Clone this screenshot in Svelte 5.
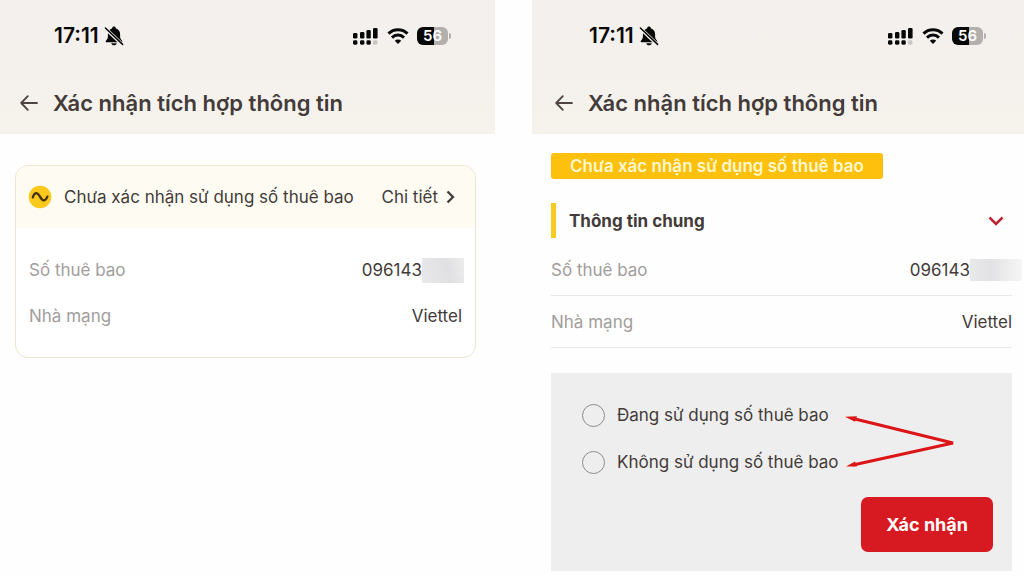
<script>
  let usage = $state('');
  const phone = '096143';
</script>

{#snippet header()}
  <header>
    <div class="status">
      <span class="clock">17:11</span>
      <svg class="bell" width="20" height="20" viewBox="0 0 20 20" aria-label="Im lặng" role="img">
        <path d="M1.600 15.400c0-.9 2.300-2 2.300-4.400V8.300C3.900 5 5.600 3.300 8 2.600 8.300 1.200 9.100.6 10 .6s1.700.6 2 2c2.400.7 4.100 2.400 4.100 5.700V11c0 2.400 2.300 3.500 2.300 4.400 0 .5-.3.800-.9.800h-15c-.6 0-.9-.3-.9-.8zM7.300 17.200h5.400c-.3 1.400-1.300 2.100-2.700 2.100s-2.400-.7-2.700-2.100z" fill="#080808" />
        <path d="M1.200 2.200 18.600 18.800" stroke="#f4f1ed" stroke-width="3.400" />
        <path d="M1.400 2 18.600 18.400" stroke="#080808" stroke-width="1.500" stroke-linecap="round" />
      </svg>
      <svg class="signal" width="26" height="18" viewBox="0 0 26 18" aria-label="Sóng di động" role="img">
        <g fill="#080808">
          <rect x="0" y="6" width="4.400" height="5.500" rx="1.300" />
          <rect x="7" y="5" width="4.400" height="6.500" rx="1.300" />
          <rect x="13.400" y="3" width="4.400" height="8.500" rx="1.300" />
          <rect x="20" y="1" width="4.600" height="10.500" rx="1.300" />
          <rect x="0" y="13.300" width="4.400" height="4.400" rx="1.400" />
          <rect x="7" y="13.300" width="4.400" height="4.400" rx="1.400" />
          <rect x="13.400" y="13.300" width="4.400" height="4.400" rx="1.400" />
        </g>
        <rect x="20" y="13.300" width="4.400" height="4.400" rx="1.400" fill="#c8c5c3" />
      </svg>
      <svg class="wifi" width="22" height="16" viewBox="0 0 22 16" aria-label="Wi-Fi" role="img">
        <g fill="none" stroke="#080808" stroke-width="3">
          <path d="M1.500 5.600a13.500 13.500 0 0 1 19 0" />
          <path d="M5 9.600a8.500 8.500 0 0 1 12 0" />
        </g>
        <path d="M11 16 7.800 12.700a4.600 4.600 0 0 1 6.400 0z" fill="#080808" />
      </svg>
      <div class="battery"><span>56</span></div>
    </div>
    <div class="title">
      <button class="back" aria-label="Quay lại">
        <svg width="18" height="16" viewBox="0 0 18 16" fill="none" stroke="#4e4543" stroke-width="1.800" stroke-linecap="round" stroke-linejoin="round">
          <path d="M17 8H1.200M7.800 1.200 1.200 8l6.600 6.800" />
        </svg>
      </button>
      <h1>Xác nhận tích hợp thông tin</h1>
    </div>
  </header>
{/snippet}

<main>
  <section class="screen">
    {@render header()}
    <article class="card">
      <div class="card-head">
        <svg width="24" height="24" viewBox="0 0 24 24" aria-hidden="true">
          <circle cx="12" cy="12" r="11.300" fill="#fac91b" />
          <path d="M4.800 12.400C6.400 7 9.200 6.600 11.800 11.400s5.200 5.600 7.600.2" fill="none" stroke="#43350f" stroke-width="2.300" stroke-linecap="round" />
        </svg>
        <span>Chưa xác nhận sử dụng số thuê bao</span>
        <a href="#chi-tiet">
          Chi tiết
          <svg width="9" height="14" viewBox="0 0 9 14" fill="none" stroke="#433b39" stroke-width="2.300" aria-hidden="true">
            <path d="m1.500 1.500 5.500 5.500-5.500 5.500" />
          </svg>
        </a>
      </div>
      <dl>
        <div><dt>Số thuê bao</dt><dd>{phone}<i class="mask"></i></dd></div>
        <div><dt>Nhà mạng</dt><dd>Viettel</dd></div>
      </dl>
    </article>
  </section>

  <section class="screen detail">
    {@render header()}
    <div class="body">
      <p class="badge">Chưa xác nhận sử dụng số thuê bao</p>
      <button class="section-head" aria-expanded="true">
        <span>Thông tin chung</span>
        <svg width="16" height="10" viewBox="0 0 16 10" fill="none" stroke="#bd2530" stroke-width="2.500" aria-hidden="true">
          <path d="m1.500 1.500 6.500 6.500 6.500-6.500" />
        </svg>
      </button>
      <dl>
        <div><dt>Số thuê bao</dt><dd>{phone}<i class="mask"></i></dd></div>
        <div><dt>Nhà mạng</dt><dd>Viettel</dd></div>
      </dl>
      <form onsubmit={(e) => e.preventDefault()}>
        <label><input type="radio" name="usage" value="yes" bind:group={usage} /><span>Đang sử dụng số thuê bao</span></label>
        <label><input type="radio" name="usage" value="no" bind:group={usage} /><span>Không sử dụng số thuê bao</span></label>
        <button class="confirm">Xác nhận</button>
        <svg class="arrows" width="110" height="52" viewBox="0 0 110 52" aria-hidden="true">
          <path d="M8 2.500 108 27 8 49" fill="none" stroke="#dc1518" stroke-width="3" />
          <path d="m0 .8 12-.6-2 5.500zM1 50.600l9-5 2 5z" fill="#dc1518" />
        </svg>
      </form>
    </div>
  </section>
</main>

<style>
  :global(body) {
    margin: 0;
    background: #fefefe;
  }
  main {
    display: grid;
    grid-template-columns: 495fr 492fr;
    column-gap: 37px;
    font-family: Inter, 'Liberation Sans', sans-serif;
    font-size: 17px;
    line-height: 24px;
    color: #433b39;
  }
  .screen {
    --inset: 20px;
    --status-end: 44px;
    min-width: 0;
  }
  .detail {
    --inset: 23px;
    --status-end: 38px;
  }
  button {
    font: inherit;
    color: inherit;
    border: 0;
    padding: 0;
    background: none;
    cursor: pointer;
  }
  svg {
    display: block;
    flex: none;
  }
  header {
    box-sizing: border-box;
    height: 134px;
    padding: 24px var(--status-end) 0 var(--inset);
    background: linear-gradient(#f3f0ed, #f4f1ed 55%, #f6f2eb);
  }
  .status {
    display: flex;
    align-items: center;
    height: 24px;
    padding-left: 34px;
    color: #080808;
  }
  .clock {
    font-size: 21px;
    font-weight: 600;
  }
  .bell {
    margin-left: 5px;
  }
  .signal {
    margin-left: auto;
  }
  .wifi {
    margin-left: 8px;
  }
  .battery {
    position: relative;
    width: 31px;
    height: 18px;
    margin: 0 3px 0 8px;
    border-radius: 6px;
    background: linear-gradient(90deg, #080808 56%, #b3afad 56%);
    color: #fff;
    font-size: 15px;
    font-weight: 600;
    line-height: 18px;
    text-align: center;
  }
  .battery::after {
    content: '';
    position: absolute;
    left: 32px;
    top: 6px;
    width: 2px;
    height: 6px;
    border-radius: 0 3px 3px 0;
    background: #b3afad;
  }
  .title {
    display: flex;
    align-items: center;
    gap: 15px;
    margin-top: 41px;
  }
  h1 {
    margin: 0;
    font-size: 22px;
    font-weight: 600;
    line-height: 28px;
    white-space: nowrap;
  }
  .card {
    margin: 31px 19px 0 15px;
    border: 1px solid #ece5cf;
    border-radius: 13px;
    overflow: hidden;
    background: #fff;
  }
  .card-head {
    display: flex;
    align-items: center;
    gap: 12px;
    height: 62px;
    padding: 0 20px 0 12px;
    background: #fefbf3;
    white-space: nowrap;
  }
  a {
    display: flex;
    align-items: center;
    gap: 8px;
    margin-left: auto;
    color: inherit;
    text-decoration: none;
  }
  dl {
    margin: 0;
  }
  dl div {
    display: flex;
    justify-content: space-between;
    align-items: center;
  }
  dt {
    color: #a19d9c;
  }
  dd {
    display: flex;
    align-items: center;
    margin: 0;
  }
  .card dl {
    padding: 19px 13px 18px;
  }
  .card dl div {
    height: 46px;
  }
  .mask {
    width: 42px;
    height: 25px;
    margin-right: -2px;
    background: linear-gradient(75deg, #e9e9eb, #e0e0e2 60%, #ededee);
  }
  .body {
    padding: 19px 12px 4px 19px;
  }
  .badge {
    width: fit-content;
    margin: 0;
    padding: 0 19px;
    border-radius: 3px;
    background: #fdc00d;
    color: #fff8cf;
    font-weight: 600;
    line-height: 26px;
    white-space: nowrap;
  }
  .section-head {
    display: flex;
    align-items: center;
    justify-content: space-between;
    width: 100%;
    height: 35px;
    margin-top: 24px;
    padding: 0 8px 0 13px;
    border-left: 5px solid #f9cb20;
    font-weight: 700;
  }
  .detail dl div {
    height: 51px;
    border-bottom: 1px solid #e8e8e8;
  }
  .detail dl {
    padding-top: 6px;
  }
  .detail .mask {
    width: 52px;
    height: 22px;
    margin-right: -10px;
    background: linear-gradient(90deg, #e9e9ea, #e2e2e4 40%, #f6f6f6);
  }
  form {
    position: relative;
    display: flex;
    flex-direction: column;
    align-items: flex-start;
    gap: 23px;
    margin-top: 25px;
    padding: 30px 19px 19px 31px;
    background: #eee;
  }
  label {
    display: flex;
    align-items: center;
    gap: 12px;
    white-space: nowrap;
  }
  input {
    appearance: none;
    box-sizing: border-box;
    width: 23px;
    height: 23px;
    margin: 0;
    border: 1px solid #8c8c8c;
    border-radius: 50%;
  }
  input:checked {
    border: 7px solid #d71920;
  }
  .confirm {
    align-self: flex-end;
    height: 55px;
    padding: 0 25px;
    border-radius: 7px;
    background: #d71a21;
    color: #fff;
    font-size: 18px;
    font-weight: 700;
  }
  .arrows {
    position: absolute;
    left: 294px;
    top: 43px;
  }
</style>
